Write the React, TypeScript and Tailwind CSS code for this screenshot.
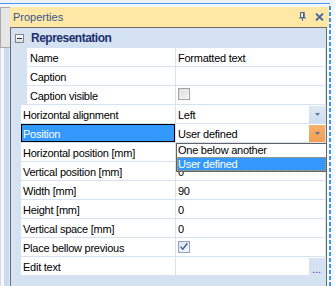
import React from "react";

type Row = {
  label: string;
  value?: string;
  indent?: boolean;
  checkbox?: "off" | "on";
  dropdown?: "normal" | "active";
  selected?: boolean;
  popup?: boolean;
  ellipsis?: boolean;
};

const rows: Row[] = [
  { label: "Name", value: "Formatted text", indent: true },
  { label: "Caption", value: "", indent: true },
  { label: "Caption visible", checkbox: "off", indent: true },
  { label: "Horizontal alignment", value: "Left", dropdown: "normal" },
  { label: "Position", value: "User defined", dropdown: "active", selected: true, popup: true },
  { label: "Horizontal position [mm]", value: "" },
  { label: "Vertical position [mm]", value: "0" },
  { label: "Width [mm]", value: "90" },
  { label: "Height [mm]", value: "0" },
  { label: "Vertical space [mm]", value: "0" },
  { label: "Place bellow previous", checkbox: "on" },
  { label: "Edit text", value: "", ellipsis: true },
];

function Arrow() {
  return (
    <svg width="5" height="3" viewBox="0 0 5 3" className="block">
      <path d="M0 0h5L2.5 3z" fill="#5877a3" />
    </svg>
  );
}

function Checkbox({ checked }: { checked: boolean }) {
  if (checked) {
    return (
      <div className="ml-[2px] mt-[3px] w-[12px] h-[12px] border border-[#8da2c4] bg-gradient-to-br from-[#dfe4ec] to-[#f6f8fb]">
        <svg width="10" height="10" viewBox="0 0 10 10" className="block">
          <path d="M1.6 4.6L3.8 7.2L8.4 1.3" stroke="#3f5c96" strokeWidth="1.4" fill="none" />
        </svg>
      </div>
    );
  }
  return (
    <div className="ml-[2px] mt-[2px] w-[12px] h-[12px] border border-[#a3a3a3] bg-gradient-to-br from-[#d6d6d6] to-[#f8f8f8] p-px">
      <div className="w-full h-full border border-[#f2f2f2]/60" />
    </div>
  );
}

function ValueCell({ row }: { row: Row }) {
  return (
    <div className="w-[149px] h-[18px] bg-white relative flex">
      {row.checkbox ? (
        <Checkbox checked={row.checkbox === "on"} />
      ) : (
        <span className="flex-1 pl-[2px] pt-[2px] leading-[16px] text-black whitespace-nowrap">{row.value}</span>
      )}
      {row.dropdown === "normal" && (
        <div className="w-[16px] h-[17px] mt-px flex items-center justify-center bg-gradient-to-b from-[#dfe9f5] to-[#ccdcee]">
          <Arrow />
        </div>
      )}
      {row.dropdown === "active" && (
        <div className="w-[16px] h-[17px] mt-px flex items-center justify-center bg-gradient-to-b from-[#f8b06a] to-[#f49f52]">
          <Arrow />
        </div>
      )}
      {row.ellipsis && (
        <div className="absolute right-[-1px] top-px w-[17px] h-[17px] bg-[#d4e2f1] flex items-end justify-center">
          <span className="text-[#3340b5] leading-[12px] tracking-[0px] pr-[2px]">...</span>
        </div>
      )}
      {row.popup && (
        <div className="absolute left-0 top-[19px] w-[151px] h-[29px] border border-[#646464] bg-white z-10 flex flex-col">
          <div className="h-[13px] pl-px leading-[13px] text-black whitespace-nowrap">One below another</div>
          <div className="h-[14px] border border-dotted border-[#e8952f] bg-[#3399ff] leading-[12px] text-white whitespace-nowrap">
            User defined
          </div>
        </div>
      )}
    </div>
  );
}

function LabelCell({ row }: { row: Row }) {
  if (row.selected) {
    return (
      <div className="w-[154px] h-[18px] bg-[#3399ff] border border-black text-white pl-px pt-px leading-[16px] whitespace-nowrap">
        {row.label}
      </div>
    );
  }
  return (
    <div
      className={
        row.indent
          ? "w-[148px] h-[18px] bg-white pl-[3px] pt-[2px] leading-[16px] text-black whitespace-nowrap"
          : "w-[154px] h-[18px] bg-white pl-[2px] pt-[2px] leading-[16px] text-black whitespace-nowrap"
      }
    >
      {row.label}
    </div>
  );
}

export default function App() {
  return (
    <div className="w-[335px] h-[286px] overflow-hidden bg-[#f3f6fa] flex flex-col font-['Liberation_Sans',Arial,sans-serif] text-[11px] tracking-[-0.25px]">
      <div className="h-[3px] bg-[#eef3f9]" />
      <div className="h-px w-[330px] bg-[#4a98ec]" />
      <div className="flex flex-1 min-h-0">
        {/* left strip */}
        <div className="w-[10px] pt-[3px] flex flex-col">
          <div className="h-[41px] w-[10px] border border-r-0 border-[#a9a9a9] bg-[#e6e6e6]" />
          <div className="flex-1 flex">
            <div className="w-px bg-[#d8d8d8]" />
            <div className="w-[3px] bg-[#f7f9fc]" />
            <div className="w-[5px] bg-[#c8dbef]" />
            <div className="w-px bg-[#e3ecf6]" />
          </div>
        </div>
        {/* main */}
        <div className="w-[319px] pt-[3px] flex flex-col">
          <div className="h-[20px] bg-[#ffe8a6] flex items-center pl-[3px] pr-[5px]">
            <span className="flex-1 text-[#34568c] leading-[18px] tracking-[0px]">Properties</span>
            <svg width="7" height="9" viewBox="0 0 7 9" className="block mr-[9px] mb-px">
              <path d="M1.5 0.5h3.5v5h-3.5z" fill="none" stroke="#4266a3" strokeWidth="1" />
              <path d="M4 0h1.5v6H4z" fill="#4266a3" />
              <path d="M0 5.5h7v1H0z" fill="#4266a3" />
              <path d="M3 6.5h1V9H3z" fill="#4266a3" />
            </svg>
            <svg width="9" height="8" viewBox="0 0 9 8" className="block mb-px">
              <path d="M1 0.5L8 7.5M8 0.5L1 7.5" stroke="#4266a3" strokeWidth="1.8" />
            </svg>
          </div>
          <div className="flex flex-1 min-h-0">
            <div className="w-[317px] border-l border-r border-t border-[#6c6c6c] bg-[#d4e2f1] flex flex-col">
              <div className="h-[20px] flex items-center">
                <div className="ml-[4px] w-[9px] h-[9px] border border-[#848484] bg-gradient-to-b from-white to-[#dcdcdc] flex items-center justify-center">
                  <div className="w-[5px] h-px bg-[#2a2a2a]" />
                </div>
                <span className="ml-[7px] font-bold text-[12px] tracking-[-0.5px] leading-[20px] text-[#1b2f6e]">
                  Representation
                </span>
              </div>
              <div className="flex flex-col gap-px">
                {rows.map((row) => (
                  <div key={row.label} className={row.indent ? "flex gap-px pl-[16px]" : "flex gap-px pl-[10px]"}>
                    <LabelCell row={row} />
                    <ValueCell row={row} />
                  </div>
                ))}
              </div>
            </div>
            <div className="w-[2px] bg-[#f4f7fb]" />
          </div>
        </div>
        {/* dashed line */}
        <div className="w-[2px] mt-[2px] bg-[repeating-linear-gradient(to_bottom,#3d95ee_0px,#3d95ee_4px,transparent_4px,transparent_6px)]" />
        <div className="flex-1 bg-[#f5f8fc]" />
      </div>
    </div>
  );
}
